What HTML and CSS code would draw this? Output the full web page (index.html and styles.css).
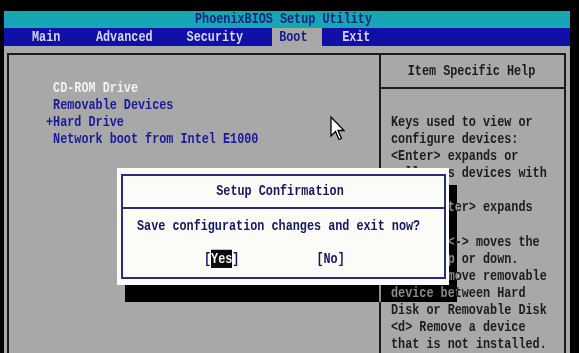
FILE: index.html
```html
<!DOCTYPE html>
<html>
<head>
<meta charset="utf-8">
<title>PhoenixBIOS Setup Utility</title>
<link rel="stylesheet" href="styles.css">
</head>
<body>
<div class="screen">
  <div class="title"><span class="tx">PhoenixBIOS Setup Utility</span></div>
  <div class="menu">
    <span class="mi tx mi-main">Main</span>
    <span class="mi tx mi-adv">Advanced</span>
    <span class="mi tx mi-sec">Security</span>
    <span class="mi mi-boot"><span class="tx">Boot</span></span>
    <span class="mi tx mi-exit">Exit</span>
  </div>
  <div class="main">
    <div class="frame">
      <div class="left">
        <div class="row tx sel"> CD-ROM Drive</div>
        <div class="row tx"> Removable Devices</div>
        <div class="row tx">+Hard Drive</div>
        <div class="row tx"> Network boot from Intel E1000</div>
      </div>
      <div class="right">
        <div class="help-head"><span class="tx">Item Specific Help</span></div>
        <div class="help-body">
          <div class="hl tx">Keys used to view or</div>
          <div class="hl tx">configure devices:</div>
          <div class="hl tx">&lt;Enter&gt; expands or</div>
          <div class="hl tx">collapses devices with</div>
          <div class="hl tx">a + or -</div>
          <div class="hl tx">&lt;Ctrl+Enter&gt; expands</div>
          <div class="hl tx">all</div>
          <div class="hl tx">&lt;+&gt; and &lt;-&gt; moves the</div>
          <div class="hl tx">device up or down.</div>
          <div class="hl tx">&lt;n&gt; May move removable</div>
          <div class="hl tx">device between Hard</div>
          <div class="hl tx">Disk or Removable Disk</div>
          <div class="hl tx">&lt;d&gt; Remove a device</div>
          <div class="hl tx">that is not installed.</div>
        </div>
      </div>
    </div>
  </div>
  <div class="shadow"></div>
  <div class="dialog">
    <div class="dinner">
      <div class="dhead"><span class="tx">Setup Confirmation</span></div>
      <div class="dmsg tx">Save configuration changes and exit now?</div>
      <div class="dbtns">
        <span class="btn tx">[<span class="hi">Yes</span>]</span>
        <span class="btn tx">[No]</span>
      </div>
    </div>
  </div>
  <svg class="cursor" width="16" height="26" viewBox="0 0 16 26">
    <path d="M1 1 L1 20 L5.5 15.5 L9 23.5 L11.5 22.5 L8 14.5 L14 14.5 Z" fill="#ffffff" stroke="#000000" stroke-width="1.3" stroke-linejoin="miter"/>
  </svg>
</div>
</body>
</html>
```

FILE: styles.css
```css
* { box-sizing: border-box; }

html, body {
  margin: 0;
  padding: 0;
  background: #000;
  width: 579px;
  height: 353px;
  overflow: hidden;
}

.screen {
  position: relative;
  width: 579px;
  height: 353px;
  overflow: hidden;
  padding: 11px 9px 0 4px;
  font-family: "Liberation Mono", "DejaVu Sans Mono", monospace;
  font-weight: bold;
  font-size: 11.8px;
}

.tx {
  display: inline-block;
  white-space: pre;
  transform: scaleY(1.3);
}

.title {
  height: 17px;
  line-height: 17px;
  background: #17a6b6;
  color: #1a2580;
  text-align: center;
  padding-right: 7px;
}

.menu {
  display: flex;
  height: 18px;
  line-height: 18px;
  background: #1010a8;
  color: #d6d6ee;
}

.mi-main { margin-left: 28px; }
.mi-adv { margin-left: 35.6px; }
.mi-sec { margin-left: 34px; }
.mi-boot {
  margin-left: 29px;
  padding: 0 14px 0 7px;
  background: #a8a8a8;
  color: #1a1a90;
}
.mi-exit { margin-left: 20.6px; }

.main {
  height: 307px;
  background: #a8a8a8;
  padding: 7px 4px 0 3px;
}

.frame {
  display: grid;
  grid-template-columns: 372px 1fr;
  height: 320px;
  border: 2px solid #1c1c1c;
  border-bottom: none;
}

.left {
  border-right: 2px solid #1c1c1c;
  padding: 24.5px 0 0 37px;
  color: #1a1a98;
}

.row {
  display: block;
  line-height: 17px;
  height: 17px;
}

.row.sel { color: #f2f2f2; }

.right {
  display: flex;
  flex-direction: column;
  color: #1c1c1c;
}

.help-head {
  height: 34px;
  line-height: 32px;
  text-align: center;
  border-bottom: 2px solid #1c1c1c;
  padding-right: 2px;
}

.help-body {
  padding: 25px 0 0 10px;
}

.hl {
  display: block;
  height: 17.1px;
  line-height: 17.1px;
}

.shadow {
  position: absolute;
  left: 125px;
  top: 185px;
  width: 332px;
  height: 117px;
  background: #a8a8a8;
  mix-blend-mode: difference;
  z-index: 1;
}

.dialog {
  position: absolute;
  left: 117px;
  top: 168px;
  width: 332px;
  height: 117px;
  background: #fbfbf8;
  padding: 6px 3px 6px 4px;
  z-index: 2;
  color: #16165e;
}

.dinner {
  height: 100%;
  border: 2px solid #2c2c78;
  display: flex;
  flex-direction: column;
}

.dhead {
  height: 33px;
  line-height: 31px;
  border-bottom: 2px solid #2c2c78;
  text-align: center;
  padding-right: 7px;
}

.dmsg {
  display: block;
  margin-top: 8.5px;
  height: 17px;
  line-height: 17px;
  padding-left: 14px;
}

.dbtns {
  display: flex;
  gap: 77px;
  margin-top: 16px;
  height: 17px;
  line-height: 17px;
  padding-left: 81px;
}

.hi {
  background: #0a0a0a;
  color: #f4f4f4;
}

.cursor {
  position: absolute;
  left: 330px;
  top: 116px;
  z-index: 3;
}
```
